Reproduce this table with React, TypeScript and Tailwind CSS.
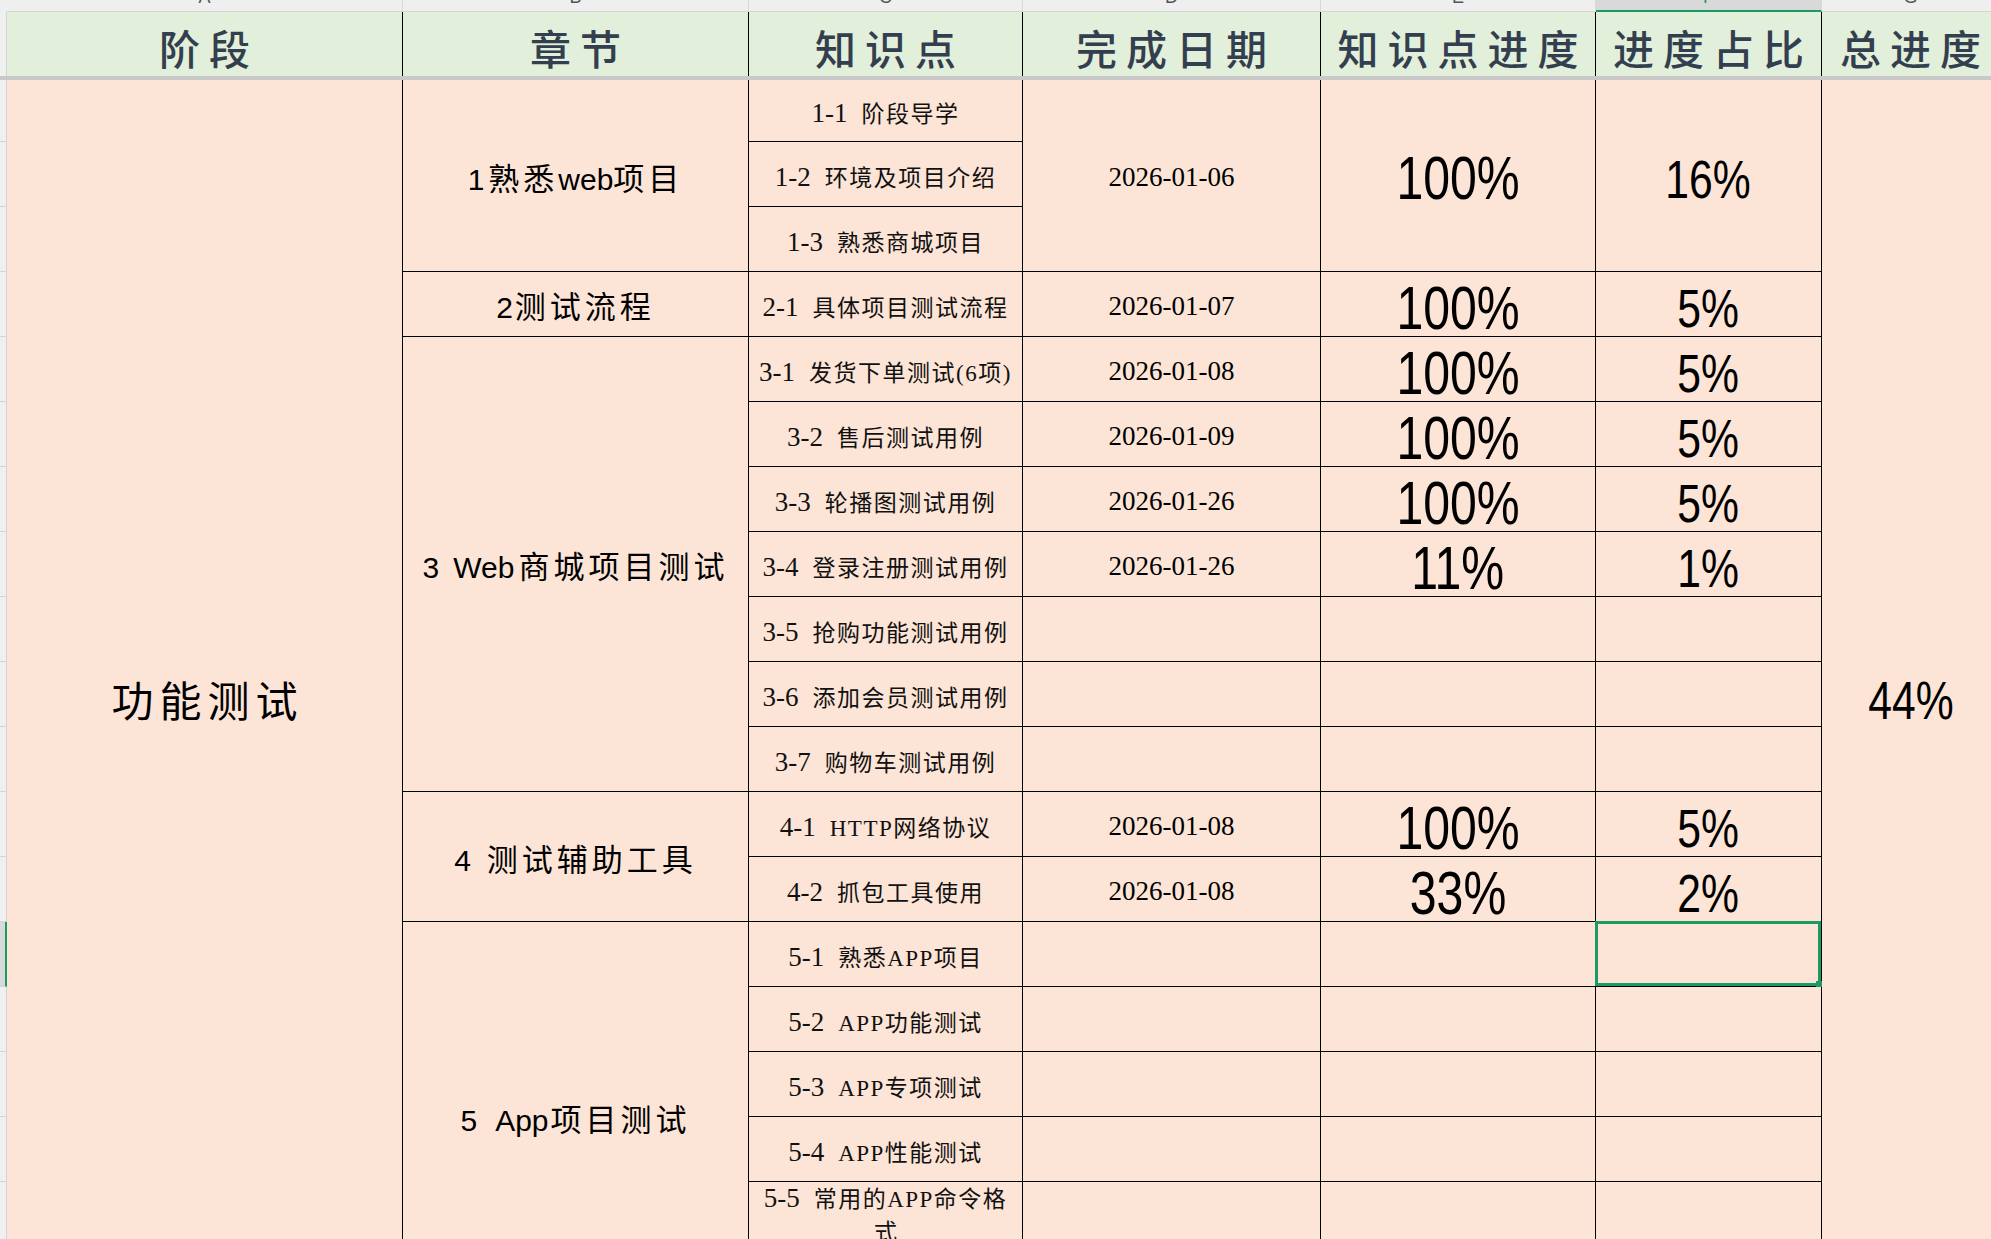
import React from "react";

const ROW = [
  "",
  "row-start-4",
  "row-start-5",
  "row-start-6",
  "row-start-7",
  "row-start-8",
  "row-start-9",
  "row-start-10",
  "row-start-11",
  "row-start-12",
  "row-start-13",
  "row-start-14",
  "row-start-15",
  "row-start-16",
  "row-start-17",
  "row-start-18",
  "row-start-19",
  "row-start-20",
  "row-start-21",
  "row-start-22",
];

const SANS = "[font-family:'Liberation_Sans','Noto_Sans_CJK_SC',sans-serif]";
const SERIF = "[font-family:'Liberation_Serif','Noto_Sans_CJK_SC',serif]";
const CJK = "[font-family:'Noto_Sans_CJK_SC',sans-serif]";

const cell = "flex items-center justify-center border-r border-b border-black bg-[#fce4d6] overflow-hidden";

function Lat({ children, className = "" }: { children: React.ReactNode; className?: string }) {
  return <span className={SANS + " text-[30px] " + className}>{children}</span>;
}
function Han({ children, className = "" }: { children: React.ReactNode; className?: string }) {
  return <span className={CJK + " text-[31px] tracking-[4px] " + className}>{children}</span>;
}

function Pct({ v, big = false }: { v: string; big?: boolean }) {
  return (
    <span
      className={
        "inline-block scale-x-[0.79] leading-none text-black [font-family:'Liberation_Sans',sans-serif] " +
        (big ? "text-[61px]" : "text-[54px]")
      }
    >
      {v}
    </span>
  );
}

function KP({ num, text }: { num: string; text: string }) {
  return (
    <div className="whitespace-nowrap pt-[6px] leading-none text-[#111]">
      <span className={SERIF + " text-[27px]"}>{num}</span>
      <span className={SERIF + " ml-[14px] text-[23px] tracking-[1.5px]"}>{text}</span>
    </div>
  );
}

type R = { k: number; num: string; text: string; date?: string; e?: string; f?: string };

const rows: R[] = [
  { k: 1, num: "1-1", text: "阶段导学" },
  { k: 2, num: "1-2", text: "环境及项目介绍" },
  { k: 3, num: "1-3", text: "熟悉商城项目" },
  { k: 4, num: "2-1", text: "具体项目测试流程", date: "2026-01-07", e: "100%", f: "5%" },
  { k: 5, num: "3-1", text: "发货下单测试(6项)", date: "2026-01-08", e: "100%", f: "5%" },
  { k: 6, num: "3-2", text: "售后测试用例", date: "2026-01-09", e: "100%", f: "5%" },
  { k: 7, num: "3-3", text: "轮播图测试用例", date: "2026-01-26", e: "100%", f: "5%" },
  { k: 8, num: "3-4", text: "登录注册测试用例", date: "2026-01-26", e: "11%", f: "1%" },
  { k: 9, num: "3-5", text: "抢购功能测试用例", date: "", e: "", f: "" },
  { k: 10, num: "3-6", text: "添加会员测试用例", date: "", e: "", f: "" },
  { k: 11, num: "3-7", text: "购物车测试用例", date: "", e: "", f: "" },
  { k: 12, num: "4-1", text: "HTTP网络协议", date: "2026-01-08", e: "100%", f: "5%" },
  { k: 13, num: "4-2", text: "抓包工具使用", date: "2026-01-08", e: "33%", f: "2%" },
  { k: 14, num: "5-1", text: "熟悉APP项目", date: "", e: "", f: "" },
  { k: 15, num: "5-2", text: "APP功能测试", date: "", e: "", f: "" },
  { k: 16, num: "5-3", text: "APP专项测试", date: "", e: "", f: "" },
  { k: 17, num: "5-4", text: "APP性能测试", date: "", e: "", f: "" },
  { k: 18, num: "5-5", text: "常用的APP命令格式", date: "", e: "", f: "" },
  { k: 19, num: "5-6", text: "", date: "", e: "", f: "" },
];

const letters = [
  { col: "col-start-2", l: "A", sel: false },
  { col: "col-start-3", l: "B", sel: false },
  { col: "col-start-4", l: "C", sel: false },
  { col: "col-start-5", l: "D", sel: false },
  { col: "col-start-6", l: "E", sel: false },
  { col: "col-start-7", l: "F", sel: true },
  { col: "col-start-8", l: "G", sel: false },
];

const headers = [
  { col: "col-start-2", t: "阶段" },
  { col: "col-start-3", t: "章节" },
  { col: "col-start-4", t: "知识点" },
  { col: "col-start-5", t: "完成日期" },
  { col: "col-start-6", t: "知识点进度" },
  { col: "col-start-7", t: "进度占比" },
  { col: "col-start-8", t: "总进度" },
];

export default function App() {
  return (
    <div className="h-[1239px] w-[1991px] overflow-hidden bg-[#fce4d6]">
      <div className="grid w-[2000px] grid-cols-[7px_396px_346px_274px_298px_275px_226px_178px] grid-rows-[12px_64px_4px_62px_repeat(18,65px)]">
        {/* corner */}
        <div className="col-start-1 row-start-1 bg-[#efefef]" />
        {letters.map((c) => (
          <div
            key={c.l}
            className={
              c.col +
              " row-start-1 flex justify-center overflow-hidden border-r border-r-[#d9d9d9] " +
              (c.sel
                ? "border-b-2 border-b-[#1c9a63] bg-[#d9d9d9] text-[#1c9a63]"
                : "border-b border-b-[#d4d4d4] bg-[#efefef] text-[#555]")
            }
          >
            <span className="-mt-[12px] text-[18px] leading-[18px] [font-family:'Liberation_Sans',sans-serif]">{c.l}</span>
          </div>
        ))}

        {/* header row */}
        <div className="col-start-1 row-start-2 border-r border-[#d4d4d4] bg-[#f0f0f0]" />
        {headers.map((h) => (
          <div
            key={h.t}
            className={
              h.col +
              " row-start-2 flex items-center justify-center overflow-hidden whitespace-nowrap border-r border-black bg-[#e2efda] pl-[9px] pt-[6px] text-[41px] font-medium leading-none tracking-[9px] text-[#333f4f] " +
              CJK
            }
          >
            {h.t}
          </div>
        ))}

        {/* frozen divider */}
        <div className="col-span-8 col-start-1 row-start-3 bg-[#c9c9c9]" />

        {/* row header strip */}
        {rows.map((r) => (
          <div
            key={"s" + r.k}
            className={
              "col-start-1 " +
              ROW[r.k] +
              (r.k === 14
                ? " border-b border-b-[#d4d4d4] border-r-2 border-r-[#1c9a63] bg-[#d9d9d9]"
                : " border-r border-b border-[#d4d4d4] bg-[#f0f0f0]")
            }
          />
        ))}

        {/* column A merged */}
        <div className={"col-start-2 row-start-4 row-span-19 flex items-center justify-center border-r border-black bg-[#fce4d6] pl-[6px] pt-[6px] text-[42px] leading-none tracking-[6px] text-black " + CJK}>
          功能测试
        </div>

        {/* column B chapters */}
        <div className={"col-start-3 row-start-4 row-span-3 " + cell}>
          <div className="whitespace-nowrap pt-[4px] leading-none text-black">
            <Lat>1</Lat>
            <Han className="ml-[4px]">熟悉</Han>
            <Lat>web</Lat>
            <Han>项目</Han>
          </div>
        </div>
        <div className={"col-start-3 row-start-7 " + cell}>
          <div className="whitespace-nowrap pt-[4px] leading-none text-black">
            <Lat>2</Lat>
            <Han className="ml-[2px]">测试流程</Han>
          </div>
        </div>
        <div className={"col-start-3 row-start-8 row-span-7 " + cell}>
          <div className="whitespace-nowrap pt-[4px] leading-none text-black">
            <Lat>3</Lat>
            <Lat className="ml-[14px]">Web</Lat>
            <Han className="ml-[4px]">商城项目测试</Han>
          </div>
        </div>
        <div className={"col-start-3 row-start-15 row-span-2 " + cell}>
          <div className="whitespace-nowrap pt-[4px] leading-none text-black">
            <Lat>4</Lat>
            <Han className="ml-[16px]">测试辅助工具</Han>
          </div>
        </div>
        <div className={"col-start-3 row-start-17 row-span-6 " + cell}>
          <div className="whitespace-nowrap pt-[4px] leading-none text-black">
            <Lat>5</Lat>
            <Lat className="ml-[18px]">App</Lat>
            <Han className="ml-[2px]">项目测试</Han>
          </div>
        </div>

        {/* column C knowledge points */}
        {rows.map((r) => (
          <div key={"c" + r.k} className={"col-start-4 " + ROW[r.k] + " " + cell}>
            {r.k === 18 ? (
              <div className="pt-[4px] text-center leading-[32px] text-[#111]">
                <span className={SERIF + " text-[27px]"}>5-5</span>
                <span className={SERIF + " ml-[14px] text-[23px] tracking-[1.5px]"}>常用的APP命令格</span>
                <br />
                <span className={SERIF + " text-[23px]"}>式</span>
              </div>
            ) : r.text ? (
              <KP num={r.num} text={r.text} />
            ) : null}
          </div>
        ))}

        {/* column D dates */}
        <div className={"col-start-5 row-start-4 row-span-3 " + cell}>
          <span className={SERIF + " pt-[4px] text-[27px] leading-none text-black"}>2026-01-06</span>
        </div>
        {rows
          .filter((r) => r.k >= 4)
          .map((r) => (
            <div key={"d" + r.k} className={"col-start-5 " + ROW[r.k] + " " + cell}>
              {r.date ? <span className={SERIF + " pt-[4px] text-[27px] leading-none text-black"}>{r.date}</span> : null}
            </div>
          ))}

        {/* column E */}
        <div className={"col-start-6 row-start-4 row-span-3 " + cell}>
          <div className="pt-[6px]">
            <Pct v="100%" big />
          </div>
        </div>
        {rows
          .filter((r) => r.k >= 4)
          .map((r) => (
            <div key={"e" + r.k} className={"col-start-6 " + ROW[r.k] + " " + cell}>
              {r.e ? (
                <div className="pt-[8px]">
                  <Pct v={r.e} big />
                </div>
              ) : null}
            </div>
          ))}

        {/* column F */}
        <div className={"col-start-7 row-start-4 row-span-3 " + cell}>
          <div className="pt-[6px]">
            <Pct v="16%" />
          </div>
        </div>
        {rows
          .filter((r) => r.k >= 4)
          .map((r) => (
            <div
              key={"f" + r.k}
              className={"col-start-7 " + ROW[r.k] + " " + cell + (r.k === 14 ? " relative overflow-visible" : "")}
            >
              {r.f ? (
                <div className="pt-[8px]">
                  <Pct v={r.f} />
                </div>
              ) : null}
              {r.k === 14 ? (
                <div className="absolute -left-[1px] -top-[1px] right-0 bottom-0 border-[3px] border-[#1c9a63]">
                  <div className="absolute -bottom-[4px] -right-[4px] h-[6px] w-[6px] bg-[#1c9a63]" />
                </div>
              ) : null}
            </div>
          ))}

        {/* column G merged */}
        <div className="col-start-8 row-start-4 row-span-19 flex items-center justify-center bg-[#fce4d6]">
          <div className="pt-[8px]">
            <Pct v="44%" />
          </div>
        </div>
      </div>
    </div>
  );
}
